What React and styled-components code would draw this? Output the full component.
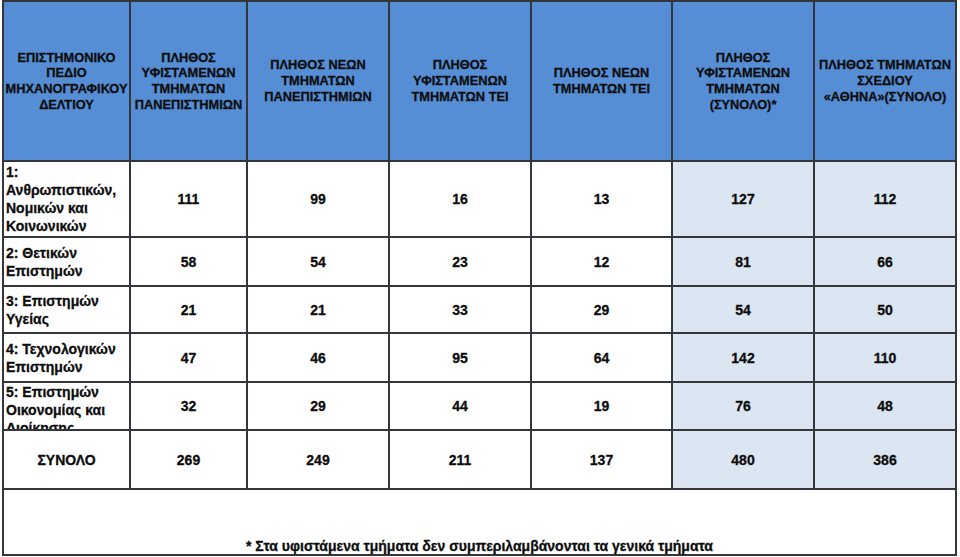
import React from "react";
import styled, { createGlobalStyle } from "styled-components";

const headers = [
  ["ΕΠΙΣΤΗΜΟΝΙΚΟ", "ΠΕΔΙΟ", "ΜΗΧΑΝΟΓΡΑΦΙΚΟΥ", "ΔΕΛΤΙΟΥ"],
  ["ΠΛΗΘΟΣ", "ΥΦΙΣΤΑΜΕΝΩΝ", "ΤΜΗΜΑΤΩΝ", "ΠΑΝΕΠΙΣΤΗΜΙΩΝ"],
  ["ΠΛΗΘΟΣ ΝΕΩΝ", "ΤΜΗΜΑΤΩΝ", "ΠΑΝΕΠΙΣΤΗΜΙΩΝ"],
  ["ΠΛΗΘΟΣ", "ΥΦΙΣΤΑΜΕΝΩΝ", "ΤΜΗΜΑΤΩΝ ΤΕΙ"],
  ["ΠΛΗΘΟΣ ΝΕΩΝ", "ΤΜΗΜΑΤΩΝ ΤΕΙ"],
  ["ΠΛΗΘΟΣ", "ΥΦΙΣΤΑΜΕΝΩΝ", "ΤΜΗΜΑΤΩΝ", "(ΣΥΝΟΛΟ)*"],
  ["ΠΛΗΘΟΣ ΤΜΗΜΑΤΩΝ", "ΣΧΕΔΙΟΥ", "«ΑΘΗΝΑ»(ΣΥΝΟΛΟ)"],
];

const rows = [
  { label: ["1:", "Ανθρωπιστικών,", "Νομικών και", "Κοινωνικών"], values: [111, 99, 16, 13, 127, 112] },
  { label: ["2: Θετικών", "Επιστημών"], values: [58, 54, 23, 12, 81, 66] },
  { label: ["3: Επιστημών", "Υγείας"], values: [21, 21, 33, 29, 54, 50] },
  { label: ["4: Τεχνολογικών", "Επιστημών"], values: [47, 46, 95, 64, 142, 110] },
  { label: ["5: Επιστημών", "Οικονομίας και", "Διοίκησης"], values: [32, 29, 44, 19, 76, 48], top: true },
];

const totals = [269, 249, 211, 137, 480, 386];

function App() {
  return (
    <>
      <GlobalStyle />
      <Table>
        {headers.map((lines, i) => (
          <HeadCell key={i}>
            {lines.map((l, j) => (
              <div key={j}>{l}</div>
            ))}
          </HeadCell>
        ))}

        {rows.map((row, r) => (
          <React.Fragment key={r}>
            <LabelCell $top={row.top}>
              <div>
                {row.label.map((l, j) => (
                  <div key={j}>{l}</div>
                ))}
              </div>
            </LabelCell>
            {row.values.map((v, c) => (
              <NumCell key={c} $shaded={c >= 4}>
                {v}
              </NumCell>
            ))}
          </React.Fragment>
        ))}

        <NumCell>ΣΥΝΟΛΟ</NumCell>
        {totals.map((v, c) => (
          <NumCell key={c} $shaded={c >= 4}>
            {v}
          </NumCell>
        ))}

        <Footnote>
          * Στα υφιστάμενα τμήματα δεν συμπεριλαμβάνονται τα γενικά τμήματα
        </Footnote>
      </Table>
    </>
  );
}

const GlobalStyle = createGlobalStyle`
  body {
    margin: 0;
    background: #ffffff;
    font-family: "Liberation Sans", Arial, sans-serif;
  }
`;

const Table = styled.div`
  display: grid;
  grid-template-columns: 125px 115px 140px 140px 139px 140px 140px;
  grid-template-rows: 158px 74px 47px 45px 47px 46px 57px 64px;
  gap: 2px;
  padding: 2px;
  margin-left: 2px;
  width: max-content;
  background: #33363b;
  color: #0d0d0d;
  font-weight: bold;
  -webkit-text-stroke: 0.3px #0d0d0d;
`;

const HeadCell = styled.div`
  background: #558ed5;
  display: flex;
  flex-direction: column;
  align-items: center;
  justify-content: center;
  text-align: center;
  font-size: 12.8px;
  line-height: 15.7px;
  white-space: nowrap;
`;

const LabelCell = styled.div`
  background: #ffffff;
  display: flex;
  align-items: ${(p) => (p.$top ? "flex-start" : "center")};
  padding: ${(p) => (p.$top ? "0" : "0")} 2px 0;
  font-size: 14px;
  line-height: 18px;
  overflow: hidden;
  white-space: nowrap;
`;

const NumCell = styled.div`
  background: ${(p) => (p.$shaded ? "#dce6f2" : "#ffffff")};
  display: flex;
  align-items: center;
  justify-content: center;
  font-size: 14px;
`;

const Footnote = styled.div`
  grid-column: 1 / -1;
  background: #ffffff;
  display: flex;
  align-items: flex-end;
  justify-content: center;
  font-size: 14px;
  line-height: 15px;
`;

export default App;
